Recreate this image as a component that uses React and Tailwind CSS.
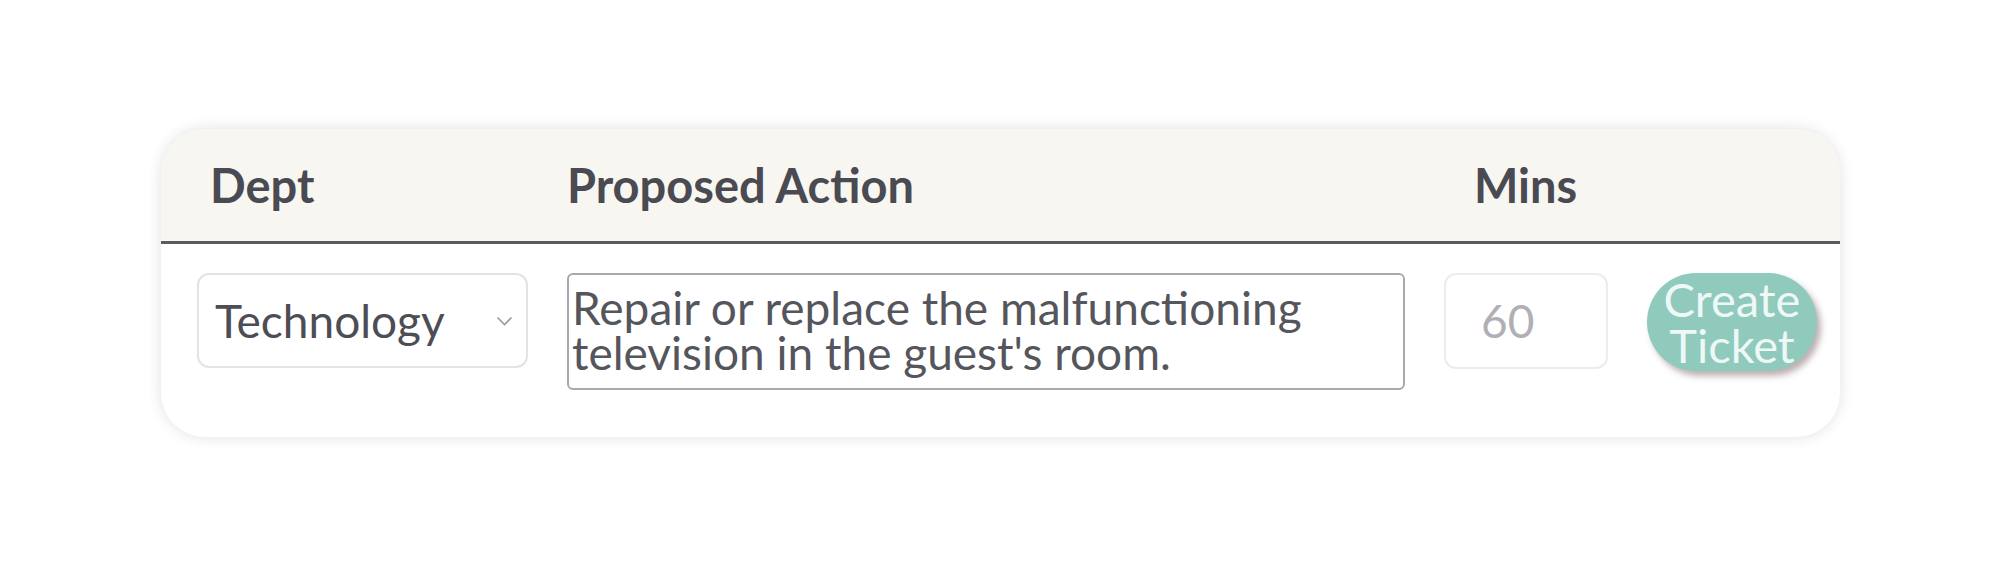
import React from "react";

export default function App() {
  return (
    <div className="min-h-[566px] w-[2000px] bg-white pt-[129px] pl-[161px]" style={{ fontFamily: "Lato, 'Open Sans', sans-serif" }}>
      <div className="w-[1679px] h-[308px] rounded-[44px] bg-white overflow-hidden shadow-[0_0_14px_rgba(60,70,90,0.16)]">
        <div className="h-[115px] bg-[#f7f6f1] border-b-[3px] border-[#5a5a60] pl-[36px] grid grid-cols-[331px_838px_164px_170px] gap-x-[39px] items-center">
          <div className="pl-[13px] text-[47px] leading-[1.2] font-bold text-[#4a4a52]">Dept</div>
          <div className="pl-0 text-[47px] leading-[1.2] font-bold text-[#4a4a52]">Proposed Action</div>
          <div className="pl-[30px] text-[47px] leading-[1.2] font-bold text-[#4a4a52]">Mins</div>
          <div />
        </div>
        <div className="h-[193px] pt-[29px] pl-[36px] grid grid-cols-[331px_838px_164px_170px] gap-x-[39px] items-start">
          <div className="h-[95px] rounded-[12px] border-2 border-[#e3e3e3] flex items-center justify-between pl-[16px] pr-[13px]">
            <span className="text-[46px] leading-[1.2] text-[#4d4d55]">Technology</span>
            <svg width="17" height="11" viewBox="0 0 17 11" className="mt-[2px]">
              <path d="M1.5 1.5 L8.5 8.5 L15.5 1.5" fill="none" stroke="#9a9aa0" strokeWidth="1.6" />
            </svg>
          </div>
          <textarea
            className="h-[117px] w-[838px] resize-none rounded-[6px] border-2 border-[#a9a9ad] bg-white px-[3px] pt-[10px] text-[46px] leading-[45px] text-[#55555c] outline-none overflow-hidden"
            style={{ fontFamily: "Lato, 'Open Sans', sans-serif" }}
            defaultValue="Repair or replace the malfunctioning television in the guest's room."
          />
          <div className="h-[96px] rounded-[12px] border-2 border-[#ececec] flex items-center pl-[35px]">
            <span className="text-[46px] leading-[1.2] text-[#b0b0b4]">60</span>
          </div>
          <button
            className="h-[98px] w-[170px] rounded-full bg-[#8fcabd] text-[47px] leading-[46px] text-[#eef8f4] shadow-[4px_5px_6px_rgba(110,80,85,0.45)] flex flex-col items-center justify-center"
            style={{ fontFamily: "Lato, 'Open Sans', sans-serif" }}
          >
            <span>Create</span>
            <span>Ticket</span>
          </button>
        </div>
      </div>
    </div>
  );
}
